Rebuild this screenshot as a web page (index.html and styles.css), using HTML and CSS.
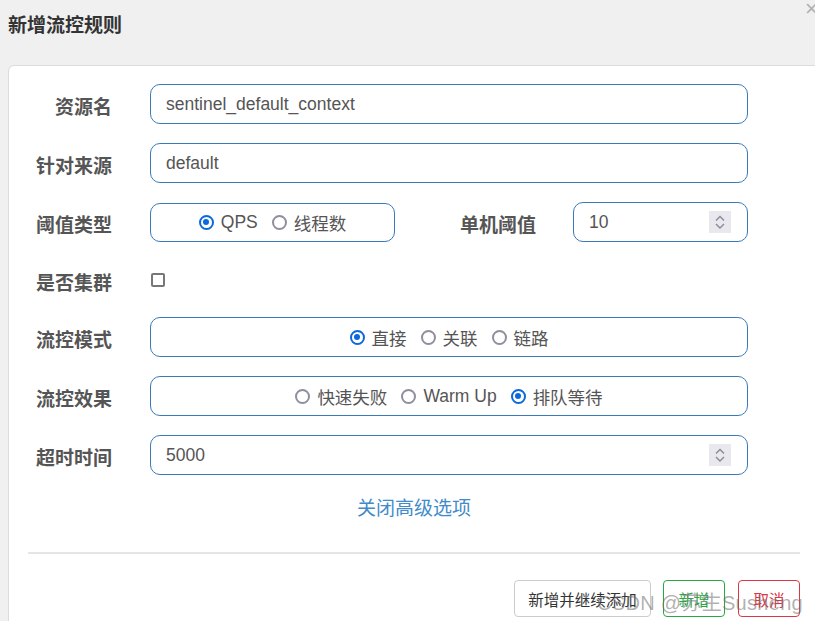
FILE: index.html
```html
<!DOCTYPE html>
<html lang="zh">
<head>
<meta charset="utf-8">
<title>新增流控规则</title>
<link rel="stylesheet" href="styles.css">
</head>
<body>
<div class="page">
  <header class="dialog-head">
    <h1 class="title">新增流控规则</h1>
    <span class="close">×</span>
  </header>
  <section class="card">
    <div class="row">
      <label class="label">资源名</label>
      <div class="input"><span class="val">sentinel_default_context</span></div>
    </div>
    <div class="row">
      <label class="label">针对来源</label>
      <div class="input"><span class="val">default</span></div>
    </div>
    <div class="row">
      <label class="label">阈值类型</label>
      <div class="radio-box narrow">
        <span class="opt"><i class="radio on"></i>QPS</span>
        <span class="opt"><i class="radio"></i>线程数</span>
      </div>
      <label class="label wide">单机阈值</label>
      <div class="input num"><span class="val">10</span><span class="spin"><svg width="22" height="22" viewBox="0 0 22 22"><path d="M7 9.5 L11 5.5 L15 9.5 M7 13 L11 17 L15 13" fill="none" stroke="#8a8a94" stroke-width="1.4"/></svg></span></div>
    </div>
    <div class="row short">
      <label class="label">是否集群</label>
      <i class="check"></i>
    </div>
    <div class="row">
      <label class="label">流控模式</label>
      <div class="radio-box">
        <span class="opt"><i class="radio on"></i>直接</span>
        <span class="opt"><i class="radio"></i>关联</span>
        <span class="opt"><i class="radio"></i>链路</span>
      </div>
    </div>
    <div class="row">
      <label class="label">流控效果</label>
      <div class="radio-box">
        <span class="opt"><i class="radio"></i>快速失败</span>
        <span class="opt"><i class="radio"></i>Warm Up</span>
        <span class="opt"><i class="radio on"></i>排队等待</span>
      </div>
    </div>
    <div class="row">
      <label class="label">超时时间</label>
      <div class="input num"><span class="val">5000</span><span class="spin"><svg width="22" height="22" viewBox="0 0 22 22"><path d="M7 9.5 L11 5.5 L15 9.5 M7 13 L11 17 L15 13" fill="none" stroke="#8a8a94" stroke-width="1.4"/></svg></span></div>
    </div>
    <div class="link-row"><a class="link">关闭高级选项</a></div>
    <hr class="divider">
    <div class="actions">
      <button class="btn wide-btn">新增并继续添加</button>
      <button class="btn ok">新增</button>
      <button class="btn cancel">取消</button>
    </div>
  </section>
  <div class="watermark">CSDN @苏生Susheng</div>
</div>
</body>
</html>
```
FILE: styles.css
```css
html, body {
  margin: 0;
  padding: 0;
  background: #f0f0f0;
  overflow: hidden;
  width: 815px;
  height: 621px;
}
body {
  font-family: "Liberation Sans", "Noto Sans CJK SC", Arial, sans-serif;
  color: #555;
}
.page {
  position: relative;
  width: 815px;
  height: 621px;
  overflow: hidden;
}
.dialog-head {
  height: 65px;
  padding-left: 8px;
}
.title {
  margin: 0;
  padding-top: 11px;
  font-size: 19px;
  line-height: 26px;
  font-weight: bold;
  color: #333;
  font-family: "Noto Sans CJK SC", sans-serif;
}
.close {
  position: absolute;
  left: 805px;
  top: -4px;
  font-size: 22px;
  color: #b0b0b0;
  font-family: "Liberation Sans", sans-serif;
}
.card {
  box-sizing: border-box;
  margin-left: 8px;
  width: 812px;
  height: 557px;
  background: #fff;
  border: 1px solid #dcdcdc;
  border-bottom: none;
  border-radius: 6px 6px 0 0;
  padding: 18px 19px 0 19px;
}
.row {
  display: flex;
  align-items: center;
  width: 720px;
  height: 40px;
  margin-bottom: 19px;
}
.row.short {
  height: 37px;
}
.label {
  width: 84px;
  text-align: right;
  margin-right: 38px;
  font-family: "Noto Sans CJK SC", sans-serif;
  font-weight: bold;
  font-size: 19px;
  color: #555;
  padding-top: 3px;
  flex: none;
}
.label.wide {
  width: 141px;
  margin-right: 37px;
}
.input {
  flex: none;
  width: 598px;
  border: 1px solid #3a7abb;
  border-radius: 10px;
  display: flex;
  align-items: center;
  padding-left: 15px;
  box-sizing: border-box;
  height: 40px;
  font-size: 17.5px;
  color: #555;
}
.input.num {
  width: auto;
  flex: 1;
  justify-content: space-between;
  padding-right: 16px;
}
.spin {
  display: block;
  width: 22px;
  height: 22px;
  background: #e8e8ee;
}
.spin svg { display: block; }
.radio-box {
  flex: none;
  width: 598px;
  height: 40px;
  box-sizing: border-box;
  border: 1px solid #3a7abb;
  border-radius: 10px;
  display: flex;
  justify-content: center;
  align-items: center;
  gap: 14px;
  font-size: 17.5px;
  color: #555;
  font-family: "Liberation Sans", "Noto Sans CJK SC", sans-serif;
}
.radio-box.narrow {
  width: 245px;
  height: 39px;
}
.opt {
  display: flex;
  align-items: center;
  gap: 7px;
}
.radio {
  display: block;
  width: 15px;
  height: 15px;
  box-sizing: border-box;
  border: 2px solid #8f8f9d;
  border-radius: 50%;
  position: relative;
}
.radio.on {
  border-color: #0b69dc;
}
.radio.on::after {
  content: "";
  position: absolute;
  left: 2.5px;
  top: 2.5px;
  width: 6px;
  height: 6px;
  border-radius: 50%;
  background: #0b69dc;
}
.check {
  display: block;
  width: 14px;
  height: 14px;
  box-sizing: border-box;
  border: 2px solid #777;
  border-radius: 2px;
  margin-left: 1px;
}
.link-row {
  width: 772px;
  text-align: center;
  height: 26px;
  line-height: 26px;
}
.link {
  font-family: "Noto Sans CJK SC", sans-serif;
  font-size: 19px;
  color: #428bca;
}
.divider {
  width: 772px;
  margin: 32px 0 0 0;
  border: none;
  height: 2px;
  background: #e5e5e5;
}
.actions {
  width: 772px;
  display: flex;
  justify-content: flex-end;
  gap: 12px;
  margin-top: 26px;
}
.btn {
  height: 37px;
  padding: 0;
  background: #fff;
  border: 1px solid #ccc;
  border-radius: 4px;
  font-family: "Noto Sans CJK SC", sans-serif;
  font-size: 15.5px;
  color: #333;
}
.btn.wide-btn {
  width: 137px;
}
.btn.ok {
  border-color: #28a745;
  color: #28a745;
  width: 62px;
}
.btn.cancel {
  border-color: #dc3545;
  color: #dc3545;
  width: 62px;
  margin-left: 1px;
}
.watermark {
  position: absolute;
  left: 597px;
  top: 587px;
  font-family: "Liberation Sans", "Noto Sans CJK SC", sans-serif;
  font-size: 20px;
  letter-spacing: 0.3px;
  color: rgba(110, 110, 110, 0.55);
  white-space: nowrap;
}
```
